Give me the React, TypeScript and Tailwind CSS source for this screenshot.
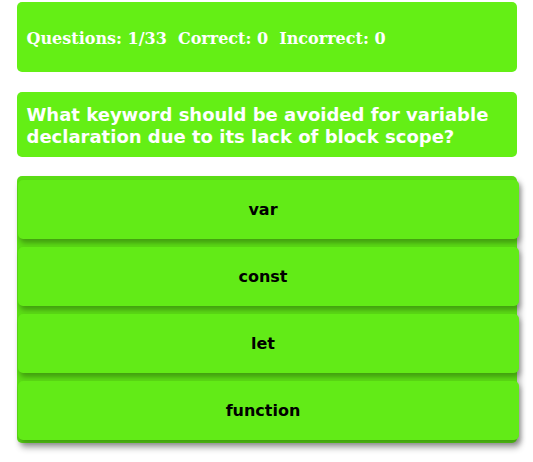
import React from 'react';

const answers = ['var', 'const', 'let', 'function'];

const App: React.FC = () => {
  return (
    <div className="min-h-screen bg-white">
      <div className="mx-auto w-[500px] pt-[2px]">
        {/* Score bar */}
        <div className="flex h-[70px] items-center rounded-[5px] bg-[#64ef15] px-[10px] pt-[3px]">
          <p className="font-['DejaVu_Serif',serif] text-[16px] font-bold text-white">
            Questions: 1/33&nbsp; Correct: 0&nbsp; Incorrect: 0
          </p>
        </div>

        {/* Question */}
        <div className="mt-[20px] rounded-[5px] bg-[#64ef15] px-[10px] pb-[9px] pt-[12px]">
          <h2 className="font-['DejaVu_Sans',sans-serif] text-[18px] font-bold leading-[22px] text-white">
            What keyword should be avoided for variable declaration due to its lack of block scope?
          </h2>
        </div>

        {/* Answers */}
        <div className="mt-[19px] flex flex-col gap-[8px] rounded-[5px] bg-[#5bdc15] pb-[3px] pt-[4px] shadow-[3px_5px_6px_rgba(0,0,0,0.3)]">
          {answers.map((a) => (
            <button
              key={a}
              className="ml-[1px] h-[59px] w-[501px] rounded-[5px] bg-[#62eb17] pr-[10px] font-['DejaVu_Sans',sans-serif] text-[16px] font-bold text-black shadow-[2px_4px_5px_rgba(0,0,0,0.28)]"
            >
              {a}
            </button>
          ))}
        </div>
      </div>
    </div>
  );
};

export default App;
